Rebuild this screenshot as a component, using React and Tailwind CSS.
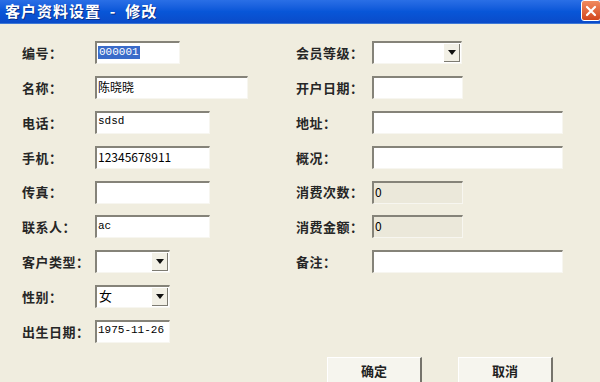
const font = { fontFamily: '"Noto Sans CJK SC", "Liberation Sans", sans-serif' };

function TextBox({ w, value, disabled, selected, mono }) {
  return (
    <div
      className={`h-[23px] border-t-2 border-l-2 border-t-[#858379] border-l-[#858379] border-b border-r border-b-[#f7f6f0] border-r-[#f7f6f0] flex items-center px-[1px] pb-[2px] leading-none text-black whitespace-nowrap overflow-hidden ${
        mono ? "text-[11px]" : "text-[12px]"
      } ${disabled ? "bg-[#ebe8da]" : "bg-white"} ${w}`}
      style={mono ? { fontFamily: '"Liberation Mono", "Noto Sans CJK SC", monospace' } : undefined}
    >
      {selected ? (
        <span className="bg-[#3a6bc9] text-white px-[1px] py-[1px]">{value}</span>
      ) : (
        value
      )}
    </div>
  );
}

function Select({ w, value }) {
  return (
    <div
      className={`h-[23px] bg-white border-t-2 border-l-2 border-t-[#858379] border-l-[#858379] border-b border-r border-b-[#f7f6f0] border-r-[#f7f6f0] flex items-center justify-between text-[13px] text-black ${w}`}
    >
      <span className="pl-[2px] pb-[2px]">{value}</span>
      <div className="h-[18px] w-[16px] mr-[1px] bg-[#f2f0e6] border-b border-r border-b-[#7d7b72] border-r-[#7d7b72] flex items-center justify-center">
        <svg width="8" height="5" viewBox="0 0 8 5">
          <path d="M0 0h8L4 5z" fill="#111" />
        </svg>
      </div>
    </div>
  );
}

function Row({ label, children, lw }) {
  return (
    <div className="h-[34.8px] flex items-center">
      <div className={`${lw} text-[13px] font-semibold text-[#262626] tracking-[0.5px]`}>{label}</div>
      {children}
    </div>
  );
}

export default function App() {
  return (
    <div className="w-[600px] h-[382px] overflow-hidden bg-[#f0eddf] flex flex-col" style={font}>
      <div className="h-[24px] flex items-center justify-between bg-gradient-to-b from-[#2a6fe6] via-[#0856d8] to-[#0a4bc9] border-b border-[#3d78d6]">
        <div className="pl-[5px] text-[15px] font-bold text-white tracking-[1px] whitespace-pre [text-shadow:1px_1px_0_#0a2f86]">
          客户资料设置  -  修改
        </div>
        <div className="self-start w-[20px] h-[21px] bg-gradient-to-b from-[#f08a5e] to-[#d2461c] border border-white rounded-[3px] flex items-center justify-center mr-[-1px]">
          <svg width="12" height="12" viewBox="0 0 12 12">
            <path d="M2 2l8 8M10 2l-8 8" stroke="#fff" strokeWidth="2.2" strokeLinecap="round" />
          </svg>
        </div>
      </div>

      <div className="flex pt-[12px]">
        <div className="pl-[22px] w-[296px] flex flex-col">
          <Row label="编号：" lw="w-[73px]">
            <TextBox w="w-[85px]" value="000001" selected mono />
          </Row>
          <Row label="名称：" lw="w-[73px]">
            <TextBox w="w-[153px]" value="陈晓晓" />
          </Row>
          <Row label="电话：" lw="w-[73px]">
            <TextBox w="w-[115px]" value="sdsd" mono />
          </Row>
          <Row label="手机：" lw="w-[73px]">
            <TextBox w="w-[115px]" value="12345678911" />
          </Row>
          <Row label="传真：" lw="w-[73px]">
            <TextBox w="w-[115px]" value="" />
          </Row>
          <Row label="联系人：" lw="w-[73px]">
            <TextBox w="w-[115px]" value="ac" mono />
          </Row>
          <Row label="客户类型：" lw="w-[73px]">
            <Select w="w-[75px]" value="" />
          </Row>
          <Row label="性别：" lw="w-[73px]">
            <Select w="w-[75px]" value="女" />
          </Row>
          <Row label="出生日期：" lw="w-[73px]">
            <TextBox w="w-[75px]" value="1975-11-26" mono />
          </Row>
        </div>
        <div className="flex flex-col">
          <Row label="会员等级：" lw="w-[76px]">
            <Select w="w-[90px]" value="" />
          </Row>
          <Row label="开户日期：" lw="w-[76px]">
            <TextBox w="w-[91px]" value="" />
          </Row>
          <Row label="地址：" lw="w-[76px]">
            <TextBox w="w-[191px]" value="" />
          </Row>
          <Row label="概况：" lw="w-[76px]">
            <TextBox w="w-[191px]" value="" />
          </Row>
          <Row label="消费次数：" lw="w-[76px]">
            <TextBox w="w-[91px]" value="0" disabled />
          </Row>
          <Row label="消费金额：" lw="w-[76px]">
            <TextBox w="w-[91px]" value="0" disabled />
          </Row>
          <Row label="备注：" lw="w-[76px]">
            <TextBox w="w-[191px]" value="" />
          </Row>
        </div>
      </div>

      <div className="flex pl-[327px] gap-[36px] pt-[8px]">
        <div className="w-[95px] h-[30px] bg-[#f6f5ee] border-t border-l border-t-white border-l-white border-r-2 border-b-2 border-r-[#75736b] border-b-[#75736b] text-[13px] font-semibold text-[#222] flex items-start justify-center pt-[3px]">
          确定
        </div>
        <div className="w-[95px] h-[30px] bg-[#f6f5ee] border-t border-l border-t-white border-l-white border-r-2 border-b-2 border-r-[#75736b] border-b-[#75736b] text-[13px] font-semibold text-[#222] flex items-start justify-center pt-[3px]">
          取消
        </div>
      </div>
    </div>
  );
}
